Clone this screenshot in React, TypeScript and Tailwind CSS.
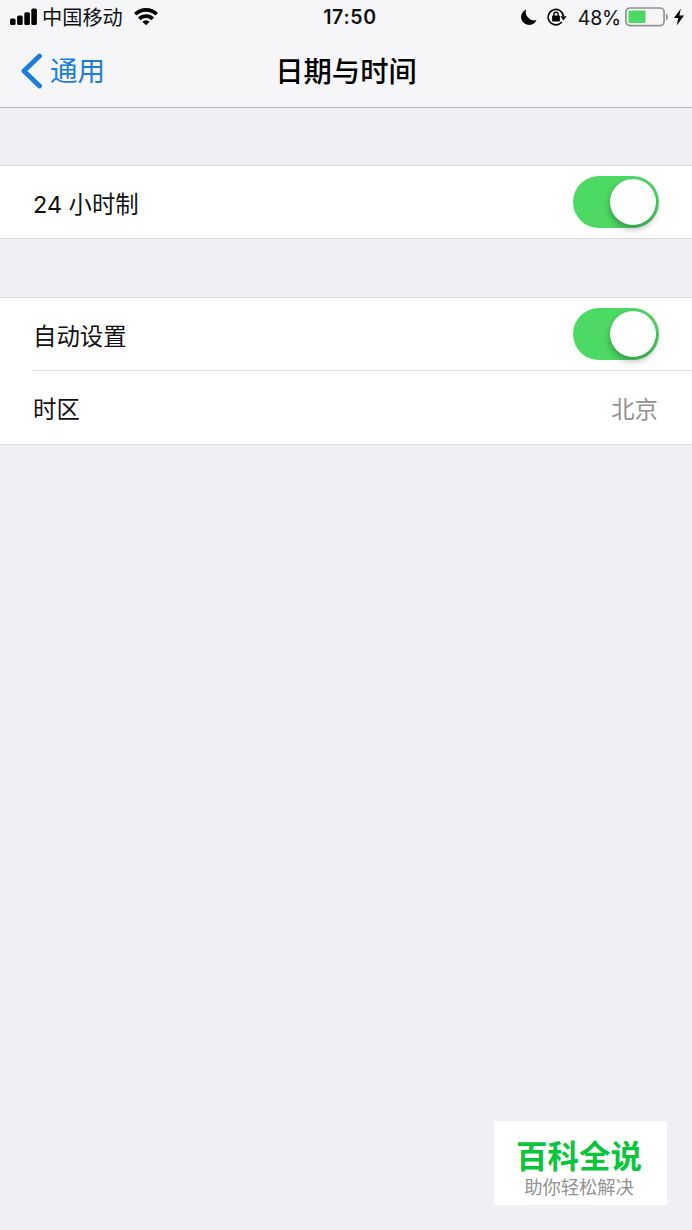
import type { ReactNode } from "react";

function SignalIcon() {
  return (
    <svg className="h-[18px] w-[28px]" viewBox="0 0 28 18" fill="#050505">
      <rect x="0" y="10.6" width="5.6" height="6.4" rx="1.6" />
      <rect x="7.1" y="7.6" width="5.6" height="9.4" rx="1.6" />
      <rect x="14.3" y="4.2" width="5.6" height="12.8" rx="1.6" />
      <rect x="21.3" y="0.6" width="5.6" height="16.4" rx="1.6" />
    </svg>
  );
}

function WifiIcon() {
  return (
    <svg className="h-[18px] w-[24px]" viewBox="0 0 24 18" fill="none" stroke="#050505" strokeWidth="3.6">
      <path d="M1.3 6.3a15.2 15.2 0 0 1 21.4 0" />
      <path d="M5.3 10.9a9.5 9.5 0 0 1 13.4 0" />
      <path d="M12 17.3l-3.7-3.5a5.3 5.3 0 0 1 7.4 0z" fill="#050505" stroke="none" />
    </svg>
  );
}

function MoonIcon() {
  return (
    <svg className="h-[16px] w-[16px]" viewBox="0 0 16 16" fill="#050505">
      <path d="M5.2.5A8 8 0 1 0 15.5 11 8.3 8.3 0 0 1 5.2.5z" />
    </svg>
  );
}

function RotationLockIcon() {
  return (
    <svg className="h-[18px] w-[20px]" viewBox="0 0 20 18" fill="none" stroke="#050505">
      <path d="M14.8 14A7.7 7.7 0 1 1 16.5 8.4" strokeWidth="1.6" />
      <path d="M13.4 8.2h6.2l-3.1 4.2z" fill="#050505" stroke="none" />
      <rect x="5.1" y="7.6" width="7.8" height="5.8" rx="0.7" fill="#050505" stroke="none" />
      <path d="M6.8 8.2V6.4a2.2 2.2 0 0 1 4.4 0v1.8" strokeWidth="1.4" />
    </svg>
  );
}

function BatteryIcon() {
  return (
    <svg className="h-[20px] w-[44px]" viewBox="0 0 44 20" fill="none">
      <rect x="0.9" y="1" width="38.2" height="17.6" rx="4" stroke="#929294" strokeWidth="1.7" />
      <rect x="3.5" y="3.6" width="17" height="12.4" rx="1" fill="#4cd964" />
      <path d="M41 6.4c2.6.8 2.6 6 0 6.8z" fill="#929294" />
    </svg>
  );
}

function BoltIcon() {
  return (
    <svg className="h-[18px] w-[12px]" viewBox="0 0 12 18" fill="#050505">
      <path d="M7.8.8L.9 10h4.4l-1.6 7.4L11.1 7.6H6.4z" />
    </svg>
  );
}

function StatusBar() {
  return (
    <div className="flex h-[34px] items-center text-[20.2px] leading-none text-[#111]">
      <div className="flex w-[280px] items-center pl-[10px]">
        <SignalIcon />
        <span className="ml-[4px] pt-[2px]">中国移动</span>
        <span className="ml-[11px]">
          <WifiIcon />
        </span>
      </div>
      <div className="w-[140px] pt-[2px] text-center font-['Inter'] text-[19.5px] font-semibold tracking-[0.7px]">17:50</div>
      <div className="flex flex-1 items-center justify-end pr-[7px]">
        <MoonIcon />
        <span className="ml-[10px]">
          <RotationLockIcon />
        </span>
        <span className="ml-[11px] pt-[3px] font-['Inter'] text-[19.5px] tracking-[-0.2px]">48%</span>
        <span className="ml-[4px]">
          <BatteryIcon />
        </span>
        <span className="ml-[4px]">
          <BoltIcon />
        </span>
      </div>
    </div>
  );
}

function NavBar() {
  return (
    <div className="grid h-[73px] grid-cols-[1fr_auto_1fr] items-center">
      <button className="flex items-center pl-[20px] text-[27.6px] leading-none text-[#1a7de0]">
        <svg className="h-[36px] w-[22px]" viewBox="0 0 22 36" fill="none" stroke="currentColor" strokeWidth="4.8" strokeLinecap="round" strokeLinejoin="round">
          <path d="M19.5 3L3.9 18l15.6 15" />
        </svg>
        <span className="ml-[8px] pt-[2px]">通用</span>
      </button>
      <h1 className="pt-[3px] text-[28.3px] leading-none font-medium text-black">日期与时间</h1>
    </div>
  );
}

function Toggle() {
  return (
    <button role="switch" aria-checked="true" className="mb-px flex h-[52px] w-[86px] items-center justify-end rounded-full bg-[#4cd964] pr-[3px]">
      <span className="h-[46px] w-[46px] rounded-full bg-white shadow-[0_4px_7px_rgba(0,0,0,0.3)]" />
    </button>
  );
}

function Row({ label, children }: { label: string; children: ReactNode }) {
  return (
    <div className="flex h-full items-center justify-between pr-[33px]">
      <span className="pt-[5px]">{label}</span>
      {children}
    </div>
  );
}

export default function App() {
  return (
    <div className="flex h-[1230px] w-[692px] flex-col bg-[#efeff4] font-['Inter','Noto_Sans_CJK_SC',sans-serif] text-[23.4px] leading-none text-[#111]">
      <header className="h-[108px] border-b border-[#bcbcc0] bg-[#f6f6f8]">
        <StatusBar />
        <NavBar />
      </header>

      <section className="mt-[57px] h-[74px] border-y border-[#d9d9dd] bg-white pl-[33px]">
        <Row label="24 小时制">
          <Toggle />
        </Row>
      </section>

      <section className="mt-[58px] h-[148px] border-y border-[#d9d9dd] bg-white pl-[33px]">
        <div className="h-[73px] border-b border-[#dededf]">
          <Row label="自动设置">
            <Toggle />
          </Row>
        </div>
        <div className="h-[73px]">
          <Row label="时区">
            <span className="pt-[5px] pr-px text-[#929294]">北京</span>
          </Row>
        </div>
      </section>

      <div className="mt-auto mr-[25px] mb-[25px] flex h-[84px] w-[173px] flex-col items-center self-end bg-white pt-[19px] pr-[3px]">
        <span className="text-[31.5px] leading-[34px] font-bold text-[#08c73b]">百科全说</span>
        <span className="mt-[3px] text-[18.3px] leading-[20px] text-[#929292]">助你轻松解决</span>
      </div>
    </div>
  );
}
